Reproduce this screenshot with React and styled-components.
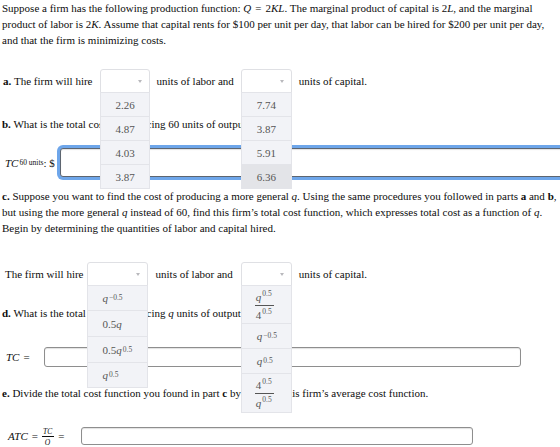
import React from "react";
import styled, { createGlobalStyle } from "styled-components";

const GlobalStyle = createGlobalStyle`
  html, body {
    margin: 0;
    padding: 0;
    overflow: hidden;
    background: #ffffff;
  }
  body {
    font-family: "Liberation Serif", "Times New Roman", serif;
    font-size: 11px;
    color: #0d0d0d;
  }
`;

// layout
const Page = styled.div`
  width: 560px;
  padding: 0 0 0 2px;
  box-sizing: border-box;
`;

const Para = styled.p`
  margin: ${(p) => p.$top || 0}px 0 0;
  line-height: 16px;
  white-space: nowrap;
`;

const Row = styled.div`
  display: flex;
  align-items: center;
  height: ${(p) => p.$h || 24}px;
  margin-top: ${(p) => p.$top || 0}px;
  padding-left: ${(p) => p.$indent || 0}px;
  white-space: nowrap;
`;

// math
const V = styled.i`
  font-style: italic;
`;

const Sup = styled.sup`
  font-size: 7.5px;
  line-height: 0;
  vertical-align: 5px;
  margin-left: 1px;
`;

const Sub = styled.sub`
  font-size: 7.5px;
  line-height: 0;
  vertical-align: -2px;
  margin-left: 1px;
`;

const Eq = styled.span`
  margin: 0 ${(p) => p.$gap || 3}px;
`;

const Num = styled.span`
  padding: 0 2px 0 1px;
  border-bottom: 1px solid currentColor;
`;

const Den = styled.span`
  padding: 0 2px 0 1px;
`;

const Frac = styled.span`
  display: inline-flex;
  flex-direction: column;
  align-items: center;
  font-size: ${(p) => p.$size || 11}px;
  line-height: ${(p) => p.$line || 12}px;
  vertical-align: middle;

  ${Num} {
    padding-top: ${(p) => p.$space ?? 2}px;
    padding-bottom: ${(p) => p.$space ?? 2}px;
  }
  ${Den} {
    padding-top: ${(p) => (p.$space ?? 2) + 1}px;
  }
`;

// dropdowns
const Select = styled.div`
  position: relative;
  width: ${(p) => p.$w}px;
  height: 24px;
  margin: 0 ${(p) => p.$right ?? 7}px 0 ${(p) => p.$left ?? 7}px;
  display: flex;
  align-items: center;
  justify-content: flex-end;
  padding-right: 7px;
  border: 1px solid #dfe0e4;
  border-radius: 3px 3px 0 0;
  background: #ffffff;
  box-sizing: border-box;
  flex-shrink: 0;
`;

const Caret = styled.span`
  width: 0;
  height: 0;
  border-left: 2.5px solid transparent;
  border-right: 2.5px solid transparent;
  border-top: 3px solid #b9b9bd;
`;

const Menu = styled.div`
  position: absolute;
  z-index: 5;
  top: 100%;
  left: -1px;
  right: -1px;
  background: #f2f3f7;
  border: 1px solid #e3e4e9;
  border-top: none;
`;

const Option = styled.div`
  display: flex;
  align-items: center;
  height: ${(p) => p.$h || 24}px;
  padding-left: ${(p) => p.$pad || 15}px;
  box-sizing: border-box;
  border-top: 1px solid #e3e4e9;
  background: ${(p) => (p.$hover ? "#e3e4e8" : "#f2f3f7")};
  color: #555;
`;

// inputs
const Label = styled.span`
  display: inline-flex;
  align-items: center;
  margin-right: ${(p) => p.$gap || 8}px;
`;

const Field = styled.div`
  width: ${(p) => p.$w}px;
  height: ${(p) => p.$h}px;
  flex-shrink: 0;
  box-sizing: border-box;
  border: 1px solid ${(p) => (p.$focus ? "#5d6570" : "#8e8e8e")};
  border-radius: 3px;
  background: #fff;
  box-shadow: inset 0 1px 1px rgba(0, 0, 0, 0.12)
    ${(p) => (p.$focus ? ", 0 0 0 3px #6ea6ea" : "")};
`;

const Dropdown = ({ w, left, right, items }) => (
  <Select $w={w} $left={left} $right={right}>
    <Caret />
    <Menu>
      {items.map((it, i) => (
        <Option key={i} $h={it.h} $pad={it.pad} $hover={it.hover}>
          {it.label}
        </Option>
      ))}
    </Menu>
  </Select>
);

const q5 = (
  <>
    <V>q</V>
    <Sup>0.5</Sup>
  </>
);

const qNeg = (
  <>
    <V>q</V>
    <Sup>−0.5</Sup>
  </>
);

const four5 = (
  <>
    4<Sup>0.5</Sup>
  </>
);

const laborA = [
  { label: "2.26" },
  { label: "4.87" },
  { label: "4.03" },
  { label: "3.87" },
];

const capitalA = [
  { label: "7.74" },
  { label: "3.87" },
  { label: "5.91" },
  { label: "6.36", hover: true },
];

const laborC = [
  { label: qNeg, h: 25 },
  {
    label: (
      <>
        0.5<V>q</V>
      </>
    ),
    h: 26,
  },
  { label: <>0.5{q5}</>, h: 26 },
  { label: q5, h: 25 },
];

const capitalC = [
  {
    label: (
      <Frac>
        <Num>{q5}</Num>
        <Den>{four5}</Den>
      </Frac>
    ),
    h: 38,
    pad: 13,
  },
  { label: qNeg, h: 25 },
  { label: q5, h: 25 },
  {
    label: (
      <Frac>
        <Num>{four5}</Num>
        <Den>{q5}</Den>
      </Frac>
    ),
    h: 39,
    pad: 13,
  },
];

export default function App() {
  return (
    <Page>
      <GlobalStyle />
      <Para>
        Suppose a firm has the following production function: <V>Q</V>
        <Eq $gap={4}>=</Eq>2<V>KL</V>. The marginal product of capital is 2
        <V>L</V>, and the marginal
        <br />
        product of labor is 2<V>K</V>. Assume that capital rents for $100 per
        unit per day, that labor can be hired for $200 per unit per day,
        <br />
        and that the firm is minimizing costs.
      </Para>

      {/* part a */}
      <Row $top={21} $indent={1}>
        <b>a.</b>&nbsp;The firm will hire
        <Dropdown w={50} items={laborA} />
        units of labor and
        <Dropdown w={51} items={capitalA} />
        units of capital.
      </Row>

      <Para $top={23}>
        <b>b.</b> What is the total cost of producing 60 units of output?
      </Para>

      <Row $top={16} $h={29} $indent={3}>
        <Label $gap={5}>
          <V>TC</V>
          <Sub>60 units</Sub>: $
        </Label>
        <Field $w={520} $h={29} $focus />
      </Row>

      {/* part c */}
      <Para $top={11}>
        <b>c.</b> Suppose you want to find the cost of producing a more general{" "}
        <V>q</V>. Using the same procedures you followed in parts <b>a</b> and{" "}
        <b>b</b>,
        <br />
        but using the more general <V>q</V> instead of 60, find this firm’s
        total cost function, which expresses total cost as a function of{" "}
        <V>q</V>.
        <br />
        Begin by determining the quantities of labor and capital hired.
      </Para>

      <Row $top={26} $indent={3}>
        The firm will hire
        <Dropdown w={61} left={3} right={8} items={laborC} />
        units of labor and
        <Dropdown w={51} left={8} items={capitalC} />
        units of capital.
      </Row>

      <Para $top={19}>
        <b>d.</b> What is the total cost of producing <V>q</V> units of output?
      </Para>

      <Row $top={26} $h={20} $indent={4}>
        <Label $gap={10}>
          <V>TC</V>
          <Eq $gap={4}>=</Eq>
        </Label>
        <Field $w={477} $h={20} />
      </Row>

      {/* part e */}
      <Para $top={18}>
        <b>e.</b> Divide the total cost function you found in part <b>c</b> by{" "}
        <V>q</V> to find this firm’s average cost function.
      </Para>

      <Row $top={26} $h={18} $indent={6}>
        <Label $gap={13}>
          <V>ATC</V>
          <Eq $gap={4}>=</Eq>
          <Frac $size={7.5} $line={7} $space={1}>
            <Num>
              <V>TC</V>
            </Num>
            <Den>
              <V>Q</V>
            </Den>
          </Frac>
          <Eq $gap={4}>=</Eq>
        </Label>
        <Field $w={392} $h={18} />
      </Row>
    </Page>
  );
}
